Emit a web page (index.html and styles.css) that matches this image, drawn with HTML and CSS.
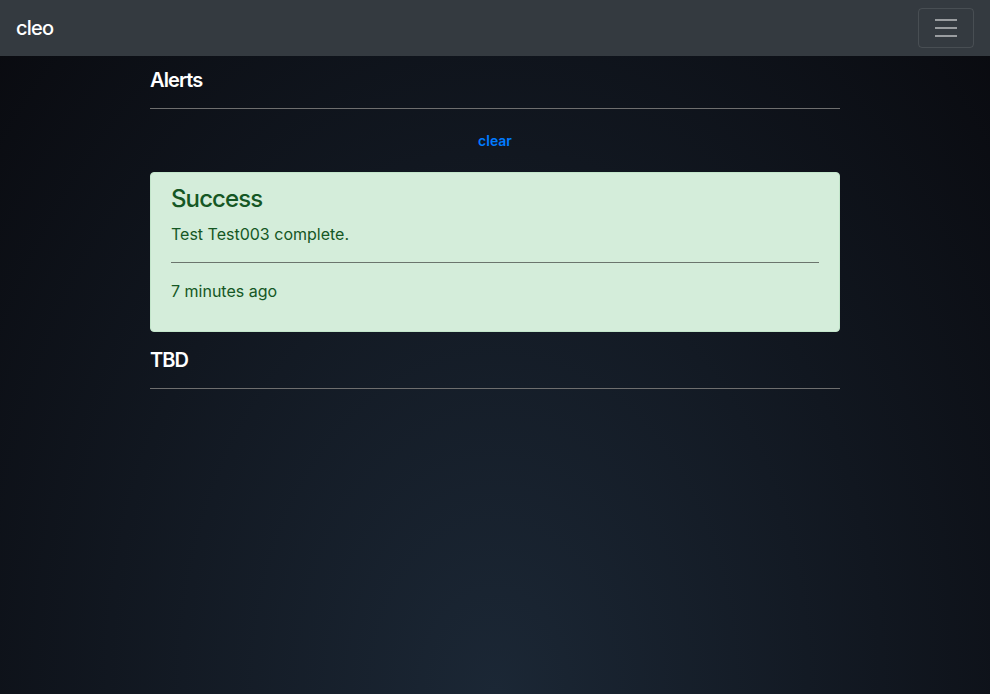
FILE: index.html
```html
<!DOCTYPE html>
<html lang="en">
<head>
<meta charset="utf-8">
<title>cleo</title>
<link rel="stylesheet" href="styles.css">
</head>
<body>
<nav class="navbar">
  <a class="brand" href="#">cleo</a>
  <button class="toggler" type="button" aria-label="Toggle navigation">
    <svg class="toggler-icon" width="30" height="30" viewBox="0 0 30 30" aria-hidden="true">
      <path d="M4 7h22M4 15h22M4 23h22" stroke="rgba(255,255,255,0.5)" stroke-width="2" stroke-linecap="butt"/>
    </svg>
  </button>
</nav>
<main class="container">
  <h5 class="section-title">Alerts</h5>
  <hr class="rule">
  <div class="clear-row"><a class="clear-btn" href="#">clear</a></div>
  <div class="alert">
    <h4 class="alert-heading">Success</h4>
    <p class="alert-text">Test Test003 complete.</p>
    <hr class="rule">
    <p class="alert-text">7 minutes ago</p>
  </div>
  <h5 class="section-title">TBD</h5>
  <hr class="rule">
</main>
</body>
</html>
```

FILE: styles.css
```css
html, body {
  margin: 0;
  padding: 0;
  height: 100%;
}

body {
  font-family: Inter, "Liberation Sans", Arial, sans-serif;
  font-size: 16px;
  line-height: 1.5;
  color: #fff;
  background: radial-gradient(ellipse at bottom, #1b2735 0%, #090a0f 100%);
  background-attachment: fixed;
  min-height: 694px;
}

.navbar {
  display: flex;
  align-items: center;
  justify-content: space-between;
  height: 56px;
  box-sizing: border-box;
  padding: 8px 16px;
  background-color: #343a40;
}

.brand {
  color: #fff;
  text-decoration: none;
  font-size: 20px;
  line-height: 30px;
  font-weight: 500;
  letter-spacing: -0.8px;
}

.toggler {
  display: flex;
  align-items: center;
  justify-content: center;
  width: 56px;
  height: 40px;
  padding: 4px 12px;
  background: transparent;
  border: 1px solid rgba(255, 255, 255, 0.1);
  border-radius: 4px;
  box-sizing: border-box;
}

.toggler-icon {
  display: block;
}

.container {
  width: 690px;
  margin: 0 auto;
  padding-top: 12px;
}

.section-title {
  margin: 0 0 8px;
  font-size: 20px;
  font-weight: 600;
  line-height: 24px;
  letter-spacing: -0.9px;
  color: #fff;
}

.rule {
  margin: 16px 0;
  border: 0;
  border-top: 1px solid #6e6e6e;
  height: 0;
}

.clear-row {
  text-align: center;
  line-height: 21px;
  padding: 5px 0 7px;
  margin-bottom: 14px;
}

.clear-btn {
  color: #007bff;
  font-size: 14px;
  font-weight: 600;
  line-height: 21px;
  text-decoration: none;
}

.alert {
  background-color: #d4edda;
  border: 1px solid #c3e6cb;
  border-radius: 4px;
  color: #155724;
  padding: 12px 20px;
  margin-bottom: 16px;
}

.alert-heading {
  margin: 0 0 8px;
  font-size: 24px;
  font-weight: 500;
  line-height: 28.8px;
  letter-spacing: -0.9px;
  color: #155724;
}

.alert-text {
  margin: 0 0 16px;
  font-size: 16px;
  line-height: 24px;
}

.alert .rule {
  border-top-color: #6b756d;
}
```
